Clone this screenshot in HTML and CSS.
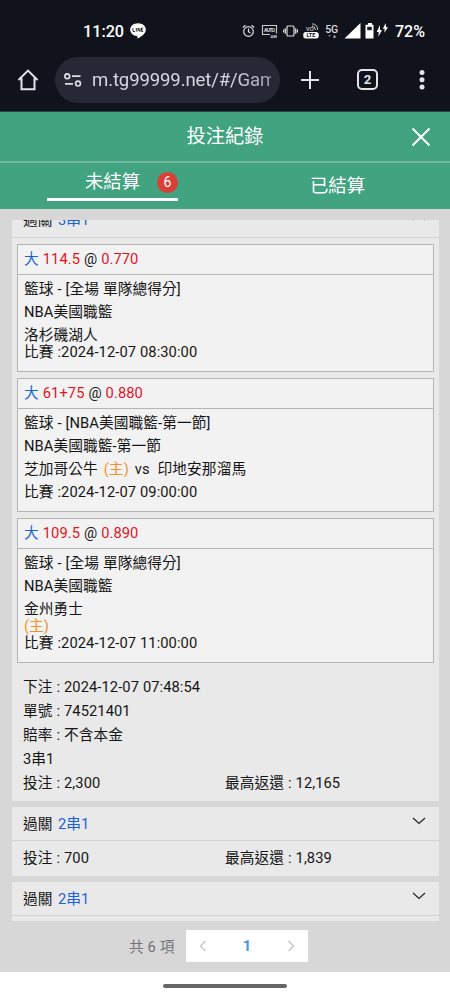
FILE: index.html
```html
<!DOCTYPE html>
<html lang="zh-Hant">
<head>
    <meta charset="UTF-8">
    <meta name="viewport" content="width=device-width, initial-scale=1.0">
    <title>投注紀錄</title>
    <link rel="stylesheet" href="styles.css">
</head>
<body>
    <div class="phone">
        <div class="status-bar">
            <span class="clock">11:20</span>
            <svg class="line-icon" width="16" height="16" viewBox="0 0 16 16">
                <path d="M8 .3C3.6.3.2 3.100.2 6.700c0 3.300 2.800 5.900 6.600 6.400.9.2.7.9.5 2.500C10.500 14 15.800 10.800 15.800 6.700 15.800 3.100 12.400.3 8 .3z" fill="#fff"/>
                <path d="M3 5v3.500h2M6.300 5v3.500M8 8.500V5l2 3.500V5M13.200 5h-1.700v3.500h1.700M11.500 6.800h1.500" fill="none" stroke="#222" stroke-width=".9"/>
            </svg>
            <div class="status-icons">
                <svg width="13" height="14" viewBox="0 0 13 14" fill="none" stroke="#ddd" stroke-width="1.200">
                    <circle cx="6.500" cy="7.500" r="4.800"/><path d="M6.500 4.500v3.200l2 1.300M.8 3.500L3.500 1.200M12.200 3.500L9.500 1.200"/>
                </svg>
                <svg class="auto" width="17" height="14" viewBox="0 0 17 14">
                    <path d="M9 10.500H1.500V1.500h14v8" fill="none" stroke="#ccc" stroke-width="1.100"/>
                    <text x="3" y="8" font-size="5" font-weight="700" textLength="11">AUTO</text>
                    <text x="9.500" y="13.500" font-size="4" font-weight="700">AM</text>
                </svg>
                <svg class="vibrate" width="15" height="12" viewBox="0 0 15 12" fill="none" stroke="#ddd" stroke-width="1.200">
                    <rect x="4" y="1" width="7" height="10" rx="1"/><path d="M2.300 3.200v5.600M.6 4.500v3M12.700 3.200v5.600M14.400 4.500v3"/>
                </svg>
                <svg class="volte" width="16" height="16" viewBox="0 0 16 16">
                    <text x="3" y="8" font-size="7.500">vo</text>
                    <path d="M9 3q3 0 3.500 4M9 .9q5.500 0 5.700 6" fill="none" stroke="#ddd" stroke-width=".9"/>
                    <rect x=".3" y="9" width="15.400" height="6.600" rx="2.500" fill="#fff"/>
                    <text class="dark" x="3.500" y="14.400" font-size="5.500" font-weight="700">LTE</text>
                </svg>
                <svg class="five-g" width="14" height="16" viewBox="0 0 14 16">
                    <text x=".3" y="9.500" font-size="10.500" font-weight="500" textLength="12.800">5G</text>
                    <path d="M3 12h3l-1.500 2z" fill="#777"/><path d="M8 14.500h3L9.500 12z" fill="#ddd"/>
                </svg>
                <svg class="signal" width="17" height="16" viewBox="0 0 17 16"><path d="M.5 15.500L16.500 0v15.500z" fill="#fff"/></svg>
                <svg class="battery" width="24" height="16" viewBox="0 0 24 16">
                    <path d="M3 0h4v1.800h1.500v13.700H.5V1.800H3z" fill="#fff"/><path d="M2.200 3.800h4.600v3.400H2.200z" fill="#202229"/>
                    <path d="M15 2l-3.300 7h2l-.4 4.800L17 7h-2zM20.800 0l-3 5.700h1.900l-.4 4L23 4.300h-2z" fill="#fff"/>
                </svg>
            </div>
            <span class="percent">72%</span>
        </div>

        <div class="browser-bar">
            <svg class="home" width="22" height="22" viewBox="0 0 22 22" fill="none" stroke="#e3e3e8" stroke-width="2"><path d="M1.500 11L11 1.600 20.500 11M4.500 9v11.300h13V9"/></svg>
            <div class="url">
                <svg width="18" height="14" viewBox="0 0 18 14" fill="none" stroke="#dcdce4" stroke-width="1.700">
                    <circle cx="3.300" cy="3.200" r="2.400"/><path d="M8 3.200h8.500M1 10.800h8"/><circle cx="14" cy="10.600" r="2.400"/>
                </svg>
                <span class="address">m.tg99999.net/#/Game</span>
            </div>
            <svg class="plus" width="20" height="20" viewBox="0 0 20 20" stroke="#e3e3e8" stroke-width="2"><path d="M10 1v18M1 10h18"/></svg>
            <div class="tab-count">2</div>
            <svg class="dots" width="6" height="20" viewBox="0 0 6 20" fill="#e3e3e8"><circle cx="3" cy="2.500" r="2.500"/><circle cx="3" cy="9.700" r="2.500"/><circle cx="3" cy="17" r="2.500"/></svg>
        </div>

        <div class="title-bar">
            <h1>投注紀錄</h1>
            <svg class="close" width="20" height="20" viewBox="0 0 20 20" stroke="#fff" stroke-width="2"><path d="M1.500 1.500l17 17M18.500 1.500l-17 17"/></svg>
        </div>

        <div class="tabs">
            <div class="tab active"><span class="tab-inner">未結算<span class="badge">6</span></span></div>
            <div class="tab">已結算</div>
        </div>

        <div class="content">
            <div class="list">
                <div class="card first">
                    <div class="card-head">
                        <span>過關 <b>3串1</b></span>
                        <svg class="arrow" width="14" height="8" viewBox="0 0 14 8"><path d="M1 7l6-5.500L13 7"/></svg>
                    </div>
                    <div class="bet">
                        <div class="bet-head"><b>大</b> <i>114.5</i> @ <i>0.770</i></div>
                        <div class="bet-body">
                            <p>籃球 - [全場 單隊總得分]</p>
                            <p>NBA美國職籃</p>
                            <p class="tight team">洛杉磯湖人</p>
                            <p class="tight">比賽 :2024-12-07 08:30:00</p>
                        </div>
                    </div>
                    <div class="bet">
                        <div class="bet-head"><b>大</b> <i>61+75</i> @ <i>0.880</i></div>
                        <div class="bet-body versus">
                            <p>籃球 - [NBA美國職籃-第一節]</p>
                            <p>NBA美國職籃-第一節</p>
                            <p>芝加哥公牛 <em class="home-team">(主)</em> <span class="vs">vs</span> 印地安那溜馬</p>
                            <p>比賽 :2024-12-07 09:00:00</p>
                        </div>
                    </div>
                    <div class="bet">
                        <div class="bet-head"><b>大</b> <i>109.5</i> @ <i>0.890</i></div>
                        <div class="bet-body">
                            <p>籃球 - [全場 單隊總得分]</p>
                            <p>NBA美國職籃</p>
                            <p class="tight team">金州勇士</p>
                            <p class="tight"><em>(主)</em></p>
                            <p class="tight">比賽 :2024-12-07 11:00:00</p>
                        </div>
                    </div>
                    <div class="info">
                        <p>下注 : 2024-12-07 07:48:54</p>
                        <p>單號 : 74521401</p>
                        <p>賠率 : 不含本金</p>
                        <p>3串1</p>
                        <div class="amounts"><span>投注 : 2,300</span><span>最高返還 : 12,165</span></div>
                    </div>
                </div>

                <div class="card">
                    <div class="card-head">
                        <span>過關 <b>2串1</b></span>
                        <svg class="arrow" width="14" height="8" viewBox="0 0 14 8"><path d="M1 1l6 5.500L13 1"/></svg>
                    </div>
                    <div class="amounts summary"><span>投注 : 700</span><span>最高返還 : 1,839</span></div>
                </div>

                <div class="card">
                    <div class="card-head">
                        <span>過關 <b>2串1</b></span>
                        <svg class="arrow" width="14" height="8" viewBox="0 0 14 8"><path d="M1 1l6 5.500L13 1"/></svg>
                    </div>
                    <div class="amounts summary"></div>
                </div>
            </div>

            <div class="pagination">
                <span class="total">共 6 項</span>
                <div class="pager">
                    <svg width="8" height="12" viewBox="0 0 8 12"><path d="M6.500 1l-5 5 5 5"/></svg>
                    <span class="page">1</span>
                    <svg width="8" height="12" viewBox="0 0 8 12"><path d="M1.500 1l5 5-5 5"/></svg>
                </div>
            </div>
        </div>

        <div class="nav-bar"><div class="handle"></div></div>
    </div>
</body>
</html>
```
FILE: styles.css
```css
* {
    margin: 0;
    padding: 0;
    box-sizing: border-box;
}

body {
    font-family: Roboto, "Noto Sans CJK TC", sans-serif;
    font-size: 14.7px;
    color: #151515;
}

svg {
    flex: none;
    display: block;
}

b, i, em {
    font-weight: normal;
    font-style: normal;
}

b { color: #1a62d6; }
i { color: #e3141e; }
em { color: #f4922a; }

.phone {
    width: 450px;
    height: 1000px;
    display: flex;
    flex-direction: column;
    overflow: hidden;
}

/* android status bar */
.status-bar {
    height: 46px;
    flex: none;
    padding: 16px 0 0 83px;
    background: #10131b;
    color: #fff;
    display: flex;
    align-items: center;
}

.clock {
    width: 47px;
    font-size: 16.2px;
    font-weight: 500;
}

.status-icons {
    display: flex;
    align-items: center;
    margin-left: 96px;
    width: 148px;
}

.status-icons text { fill: #ddd; }
.status-icons .dark { fill: #10131b; }
.auto { margin-left: 6px; }
.vibrate { margin-left: 5px; }
.volte { margin-left: 5px; }
.five-g { margin-left: 6px; }
.signal { margin-left: 5px; }
.battery { margin-left: 4px; }

.percent {
    margin-left: 5px;
    font-size: 16px;
    font-weight: 500;
}

/* browser toolbar */
.browser-bar {
    height: 66px;
    flex: none;
    background: #10131b;
    padding: 2px 0 0 17px;
    display: flex;
    align-items: center;
    border-bottom: 1px solid #29443f;
}

.url {
    width: 225px;
    height: 46px;
    margin-left: 16px;
    padding: 0 9px;
    border-radius: 23px;
    background: #262935;
    color: #d5d6e0;
    display: flex;
    align-items: center;
    gap: 10px;
}

.address {
    width: 180px;
    overflow: hidden;
    white-space: nowrap;
    font-size: 18.6px;
    letter-spacing: -0.15px;
    -webkit-mask-image: linear-gradient(90deg, #000 78%, rgba(0,0,0,0.65));
}

.plus { margin-left: 20px; }

.tab-count {
    width: 21px;
    height: 21px;
    margin-left: 37px;
    border: 2px solid #e3e3e8;
    border-radius: 5px;
    color: #e3e3e8;
    font-size: 13px;
    font-weight: 700;
    line-height: 17px;
    text-align: center;
}

.dots { margin-left: 41px; }

/* page header */
.title-bar {
    height: 51px;
    flex: none;
    background: #41a380;
    border-bottom: 2px solid #76b89f;
    color: #fff;
    display: grid;
    grid-template-columns: 60px 1fr 60px;
    align-items: center;
}

.title-bar h1 {
    grid-column: 2;
    font-size: 19.3px;
    font-weight: normal;
    line-height: 24px;
    text-align: center;
}

.close { margin-left: 21px; }

.tabs {
    height: 46px;
    flex: none;
    background: #41a380;
    color: #fff;
    display: grid;
    grid-template-columns: 1fr 1fr;
    justify-items: center;
    font-size: 18.4px;
    line-height: 26px;
}

.tab { padding-top: 10px; }
.tab.active { padding-top: 6px; }

.tab-inner {
    display: block;
    position: relative;
    width: 131px;
    height: 32px;
    border-bottom: 3px solid #fff;
    text-align: center;
}

.badge {
    position: absolute;
    right: 0;
    top: 3px;
    width: 21px;
    height: 21px;
    border-radius: 50%;
    background: #da4038;
    font-size: 14px;
    line-height: 21px;
}

/* bet list */
.content {
    height: 763px;
    flex: none;
    padding: 11px 11px 0 12px;
    background: #d7d7d7;
}

.list {
    height: 701px;
    overflow: hidden;
    letter-spacing: 0.08px;
    word-spacing: 0.2px;
}

.card {
    background: #e9e9e9;
    margin-bottom: 6px;
}

.card.first { margin-top: -16px; }

.card-head {
    height: 34px;
    padding: 0 13px 0 11px;
    border-bottom: 1px solid #d2d2d2;
    display: flex;
    align-items: center;
    justify-content: space-between;
    line-height: 24px;
}

.first .card-head { padding-bottom: 2px; }

.card-head b { margin-left: 1.5px; }

.arrow {
    fill: none;
    stroke: #222;
    stroke-width: 1.2;
    margin-top: -5px;
}

.bet {
    margin: 6px 5px 0;
    border: 1px solid #b5b5b5;
    background: #f2f2f2;
}

.bet-head {
    height: 30px;
    padding-left: 6px;
    border-bottom: 1px solid #b5b5b5;
    line-height: 28px;
}

.bet-body {
    padding: 3px 6px 10px;
    line-height: 23px;
}

.bet-body.versus { padding-bottom: 7px; }

.tight { line-height: 17px; }
.tight.team { padding-top: 3px; }
.home-team { margin-left: 2px; }
.vs { margin: 0 4px 0 2px; }

.info {
    padding: 12px 0 6px 11px;
    line-height: 24px;
}

.amounts {
    display: grid;
    grid-template-columns: 202px 1fr;
}

.summary {
    height: 35px;
    padding-left: 11px;
    line-height: 35px;
}

.pagination {
    display: flex;
    align-items: center;
    height: 32px;
    margin: 9px 0 0 117px;
}

.total {
    width: 57px;
    padding-bottom: 2px;
    color: #737373;
    letter-spacing: 0.1px;
    white-space: nowrap;
}

.pager {
    width: 122px;
    height: 32px;
    padding: 0 13px;
    background: #fff;
    display: flex;
    align-items: center;
    justify-content: space-between;
}

.pager svg {
    fill: none;
    stroke: #c4c6ca;
    stroke-width: 1.4;
}

.page {
    color: #4294ee;
    font-weight: 700;
}

.nav-bar {
    height: 28px;
    background: #fff;
    display: flex;
    align-items: center;
    justify-content: center;
}

.handle {
    width: 124px;
    height: 4px;
    border-radius: 2px;
    background: #666;
}
```
